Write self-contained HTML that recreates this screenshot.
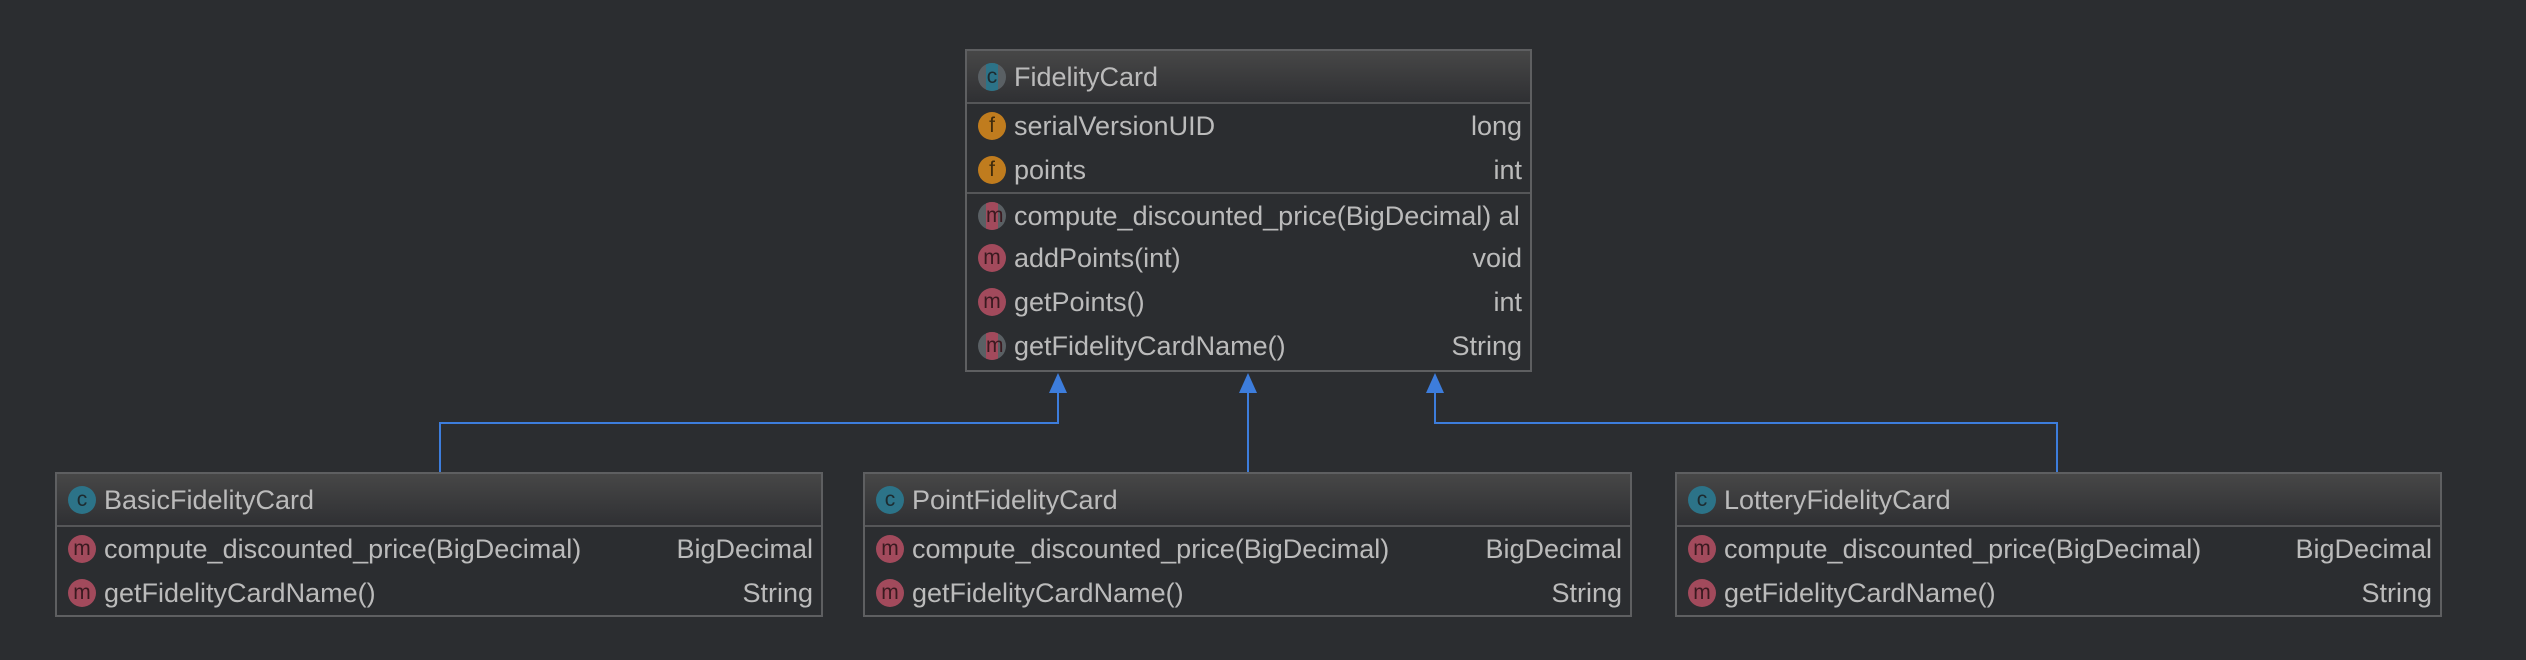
<!DOCTYPE html>
<html><head><style>
*{margin:0;padding:0;box-sizing:border-box}
body{width:2526px;height:660px;background:#2b2d30;position:relative;overflow:hidden;font-family:"Liberation Sans",sans-serif;color:#bbbbbb}
.box{position:absolute;border:2px solid #5e5f61;background:#2b2d30}
.hd{height:53px;background:linear-gradient(#474747,#2f3033);border-bottom:2px solid #555658;position:relative}
.row{height:44px;position:relative;font-size:27px;line-height:44px}
.sep{border-top:2px solid #555658}
.nm{position:absolute;left:47px;top:0;white-space:nowrap}
.ty{position:absolute;right:8px;top:0}
.hd .nm{line-height:53px;font-size:27px;left:47px}
.ic{position:absolute;left:11px;width:28px;height:28px;border-radius:50%;text-align:center;font-size:21px;line-height:27px;color:#2b2b2b}
.row .ic{top:8px}
.hd .ic{top:12px}
.c{background:#2c7388;color:#1d2b30}
.f{background:#c07c1e;color:#3f2b0c}
.m{background:#a24a5c;color:#3a1a20}
.a{background:#5a6064;overflow:hidden}
.a span{position:absolute;left:8px;top:0;width:12px;height:28px;line-height:27px;font-size:21px;text-align:center}
.a.cc span{background:#2c7388;color:#1d2b30}
.a.mm span{background:#a24a5c;color:#3a1a20}
svg{position:absolute;left:0;top:0}
</style></head><body>
<svg width="2526" height="660">
<g stroke="#3d7ddc" stroke-width="2" fill="none">
<polyline points="440,472 440,423 1058,423 1058,390"/>
<polyline points="1248,472 1248,390"/>
<polyline points="2057,472 2057,423 1435,423 1435,390"/>
</g>
<g fill="#3d7ddc">
<polygon points="1058,373 1049,393 1067,393"/>
<polygon points="1248,373 1239,393 1257,393"/>
<polygon points="1435,373 1426,393 1444,393"/>
</g>
</svg>

<div class="box" style="left:965px;top:49px;width:567px;height:323px">
<div class="hd"><div class="ic a cc"><span>c</span></div><div class="nm">FidelityCard</div></div>
<div class="row"><div class="ic f">f</div><div class="nm">serialVersionUID</div><div class="ty">long</div></div>
<div class="row"><div class="ic f">f</div><div class="nm">points</div><div class="ty">int</div></div>
<div class="row sep"><div class="ic a mm"><span>m</span></div><div class="nm">compute_discounted_price(BigDecimal) al</div></div>
<div class="row"><div class="ic m">m</div><div class="nm">addPoints(int)</div><div class="ty">void</div></div>
<div class="row"><div class="ic m">m</div><div class="nm">getPoints()</div><div class="ty">int</div></div>
<div class="row"><div class="ic a mm"><span>m</span></div><div class="nm">getFidelityCardName()</div><div class="ty">String</div></div>
</div>

<div class="box" style="left:55px;top:472px;width:768px;height:145px">
<div class="hd"><div class="ic c">c</div><div class="nm">BasicFidelityCard</div></div>
<div class="row"><div class="ic m">m</div><div class="nm">compute_discounted_price(BigDecimal)</div><div class="ty">BigDecimal</div></div>
<div class="row"><div class="ic m">m</div><div class="nm">getFidelityCardName()</div><div class="ty">String</div></div>
</div>

<div class="box" style="left:863px;top:472px;width:769px;height:145px">
<div class="hd"><div class="ic c">c</div><div class="nm">PointFidelityCard</div></div>
<div class="row"><div class="ic m">m</div><div class="nm">compute_discounted_price(BigDecimal)</div><div class="ty">BigDecimal</div></div>
<div class="row"><div class="ic m">m</div><div class="nm">getFidelityCardName()</div><div class="ty">String</div></div>
</div>

<div class="box" style="left:1675px;top:472px;width:767px;height:145px">
<div class="hd"><div class="ic c">c</div><div class="nm">LotteryFidelityCard</div></div>
<div class="row"><div class="ic m">m</div><div class="nm">compute_discounted_price(BigDecimal)</div><div class="ty">BigDecimal</div></div>
<div class="row"><div class="ic m">m</div><div class="nm">getFidelityCardName()</div><div class="ty">String</div></div>
</div>
</body></html>
